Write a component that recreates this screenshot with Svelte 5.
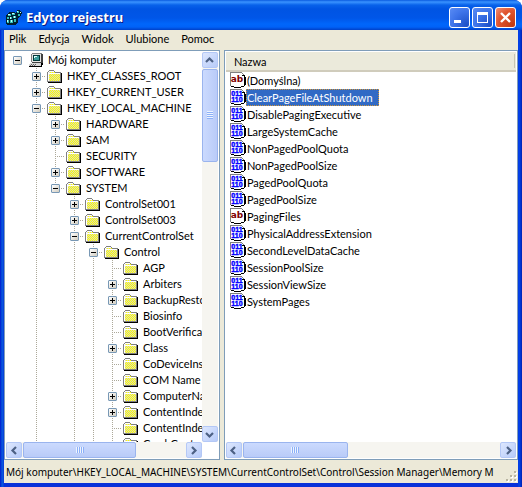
<script>
  const menu = ["Plik", "Edycja", "Widok", "Ulubione", "Pomoc"];

  const nodes = [
    { name: "Mój komputer", depth: 0, state: "open", icon: "computer" },
    { name: "HKEY_CLASSES_ROOT", depth: 1, state: "closed" },
    { name: "HKEY_CURRENT_USER", depth: 1, state: "closed" },
    { name: "HKEY_LOCAL_MACHINE", depth: 1, state: "open" },
    { name: "HARDWARE", depth: 2, state: "closed", lines: [1] },
    { name: "SAM", depth: 2, state: "closed", lines: [1] },
    { name: "SECURITY", depth: 2, state: "leaf", lines: [1] },
    { name: "SOFTWARE", depth: 2, state: "closed", lines: [1] },
    { name: "SYSTEM", depth: 2, state: "open", lines: [1], last: true },
    { name: "ControlSet001", depth: 3, state: "closed", lines: [1] },
    { name: "ControlSet003", depth: 3, state: "closed", lines: [1] },
    { name: "CurrentControlSet", depth: 3, state: "open", lines: [1] },
    { name: "Control", depth: 4, state: "open", lines: [1, 3] },
    { name: "AGP", depth: 5, state: "leaf", lines: [1, 3, 4] },
    { name: "Arbiters", depth: 5, state: "closed", lines: [1, 3, 4] },
    { name: "BackupRestore", depth: 5, state: "closed", lines: [1, 3, 4] },
    { name: "Biosinfo", depth: 5, state: "leaf", lines: [1, 3, 4] },
    { name: "BootVerification", depth: 5, state: "leaf", lines: [1, 3, 4] },
    { name: "Class", depth: 5, state: "closed", lines: [1, 3, 4] },
    { name: "CoDeviceInstallers", depth: 5, state: "leaf", lines: [1, 3, 4] },
    { name: "COM Name Arbiter", depth: 5, state: "leaf", lines: [1, 3, 4] },
    { name: "ComputerName", depth: 5, state: "closed", lines: [1, 3, 4] },
    { name: "ContentIndex", depth: 5, state: "closed", lines: [1, 3, 4] },
    { name: "ContentIndexCommon", depth: 5, state: "leaf", lines: [1, 3, 4] },
    { name: "CrashControl", depth: 5, state: "leaf", lines: [1, 3, 4] },
  ];

  const values = [
    { name: "(Domyślna)", type: "string" },
    { name: "ClearPageFileAtShutdown", type: "dword" },
    { name: "DisablePagingExecutive", type: "dword" },
    { name: "LargeSystemCache", type: "dword" },
    { name: "NonPagedPoolQuota", type: "dword" },
    { name: "NonPagedPoolSize", type: "dword" },
    { name: "PagedPoolQuota", type: "dword" },
    { name: "PagedPoolSize", type: "dword" },
    { name: "PagingFiles", type: "string" },
    { name: "PhysicalAddressExtension", type: "dword" },
    { name: "SecondLevelDataCache", type: "dword" },
    { name: "SessionPoolSize", type: "dword" },
    { name: "SessionViewSize", type: "dword" },
    { name: "SystemPages", type: "dword" },
  ];

  const path =
    "Mój komputer\\HKEY_LOCAL_MACHINE\\SYSTEM\\CurrentControlSet\\Control\\Session Manager\\Memory M";

  let selected = $state("ClearPageFileAtShutdown");
</script>

{#snippet arrow(label, d)}
  <button class="scroll-btn" aria-label={label}>
    <svg width="9" height="9" viewBox="0 0 9 9"><path {d} /></svg>
  </button>
{/snippet}

<svg class="defs" width="0" height="0" aria-hidden="true">
  <defs>
    <pattern id="dither" width="2" height="2" patternUnits="userSpaceOnUse">
      <path fill="#d8d8c0" d="M0 0h2v2H0z" />
      <path fill="#ffff00" d="M0 0h1v1H0zM1 1h1v1H1z" />
    </pattern>
    <symbol id="folder" viewBox="0 0 16 16">
      <path fill="#808080" d="M3 2h5v1H3zM2 3h1v1H2zM8 3h1v1H8zM9 4h6v1H9zM1 4h1v9H1z" />
      <path fill="#fff" d="M3 3h5v1H3zM2 4h1v9H2zM3 5h11v1H3z" />
      <path fill="url(#dither)" d="M3 4h6v1H3zM3 6h11v7H3z" />
      <path fill="#808080" d="M14 5h1v8h-1zM1 13h14v1H1z" />
      <path fill="#000" d="M15 5h1v10H2v-1h13z" />
    </symbol>
    <symbol id="computer" viewBox="0 0 16 16">
      <path fill="#808080" d="M5 1h10v1H5zM4 2h1v8H4z" />
      <path fill="#e4e4e4" d="M5 2h9v8H5z" />
      <path fill="#404040" d="M14 2h2v9h-2zM5 10h10v1H5z" />
      <path fill="#003838" d="M6 3h7v6H6z" />
      <path fill="#3c9c9c" d="M7 4h5v4H7z" />
      <path fill="#e0ffff" d="M7 4h3v1H7zM7 5h1v1H7z" />
      <path fill="#d8d8d8" d="M3 11h11v1H3zM2 12h12v1H2zM2 13h12v1H2z" />
      <path fill="#606060" d="M4 12h1v1H4zM6 12h1v1H6zM8 12h1v1H8zM3 13h1v1H3zM5 13h1v1H5zM7 13h1v1H7z" />
      <path fill="#000" d="M14 11h2v2h-1v2H2v-1h12z" />
    </symbol>
    <symbol id="page" viewBox="0 0 16 16">
      <path fill="#fff" d="M1 1h11l2 3v10h-3v1H5v-1H1z" />
      <path fill="#808080" d="M0 0h12v1H1v13H0zM12 1h1v1h-1zM13 2h1v1h-1z" />
      <path fill="#000" d="M12 3h3v1h-3zM14 4h1v10h-1zM15 5h1v8h-1zM1 14h3v1H1zM4 15h7v1H4zM11 14h3v1h-3z" />
    </symbol>
  </defs>
</svg>

<div class="window">
  <header class="title-bar">
    <svg class="app-icon" width="16" height="16" viewBox="0 0 16 16" aria-hidden="true">
      <path fill="#002030" d="M1 5l3-2h5l1 2 1-4h3l2 3-2 4-2 1v5l-3 2H1l-1-2V6z" />
      <path fill="#30c0b8" d="M2 5h3v2H2zM6 4h3v2H6zM1 8h2v2H1zM4 8h2v2H4zM7 7h3v2H7zM1 11h2v3H1zM4 11h3v3H4zM8 10h2v3H8zM11 2h2v2h-2zM12 5h2v2h-2z" />
      <path fill="#c8ffff" d="M2 5h2v1H2zM6 4h2v1H6zM4 8h1v2H4zM8 7h1v2H8zM1 11h1v2H1zM5 11h1v2H5zM11 2h1v1h-1zM14 3h1v1h-1z" />
    </svg>
    <h1>Edytor rejestru</h1>
    <div class="controls">
      <button class="control" aria-label="Minimalizuj">
        <svg width="21" height="21" viewBox="0 0 21 21"><path d="M5 13h7v3H5z" /></svg>
      </button>
      <button class="control" aria-label="Maksymalizuj">
        <svg width="21" height="21" viewBox="0 0 21 21">
          <path fill-rule="evenodd" d="M5 5h11v11H5zM6 8v7h9V8z" />
        </svg>
      </button>
      <button class="control close" aria-label="Zamknij">
        <svg width="21" height="21" viewBox="0 0 21 21">
          <path class="cross" d="M6 6l9 9M15 6l-9 9" />
        </svg>
      </button>
    </div>
  </header>

  <nav class="menu-bar">
    {#each menu as item}
      <button>{item}</button>
    {/each}
  </nav>

  <main class="panes">
    <section class="pane tree-pane">
      <div class="tree-body">
        <ul class="tree">
          {#each nodes as node}
            <li>
              {#each Array(node.depth) as _, level}
                <span class="guide" class:line={node.lines?.includes(level)}></span>
              {/each}
              <span class="guide branch" class:line={node.depth > 0} class:last={node.last}>
                {#if node.state !== "leaf"}
                  <button
                    class="expander"
                    class:closed={node.state === "closed"}
                    aria-label={node.state === "open" ? "Zwiń" : "Rozwiń"}
                  ></button>
                {/if}
              </span>
              <svg class="icon" width="16" height="16" aria-hidden="true">
                <use href={node.icon ? "#computer" : "#folder"} />
              </svg>
              <span class="label">{node.name}</span>
            </li>
          {/each}
        </ul>
        <div class="scrollbar vertical">
          {@render arrow("W górę", "M1 6l3.5-3.5L8 6")}
          <div class="track"><div class="thumb"><i></i></div></div>
          {@render arrow("W dół", "M1 3l3.5 3.5L8 3")}
        </div>
      </div>
      <div class="scrollbar horizontal">
        {@render arrow("W lewo", "M6 1L2.5 4.5 6 8")}
        <div class="track"><div class="thumb"><i></i></div></div>
        {@render arrow("W prawo", "M3 1l3.5 3.5L3 8")}
      </div>
    </section>

    <section class="pane list-pane">
      <div class="column-head"><span>Nazwa</span></div>
      <ul class="values">
        {#each values as value}
          <li>
            <svg class="icon" width="16" height="16" viewBox="0 0 16 16" aria-hidden="true">
              <use href="#page" />
              {#if value.type === "string"}
                <text class="ab" x="7" y="10">ab</text>
              {:else}
                <text class="bits" x="7" y="7">011</text>
                <text class="bits" x="7" y="13">110</text>
              {/if}
            </svg>
            <button
              class="value"
              class:selected={selected === value.name}
              onclick={() => (selected = value.name)}>{value.name}</button
            >
          </li>
        {/each}
      </ul>
      <div class="scrollbar horizontal wide">
        {@render arrow("W lewo", "M6 1L2.5 4.5 6 8")}
        <div class="track"><div class="thumb"><i></i></div></div>
        {@render arrow("W prawo", "M3 1l3.5 3.5L3 8")}
      </div>
    </section>
  </main>

  <footer class="status-bar">
    <span class="path">{path}</span>
    <svg width="12" height="12" viewBox="0 0 12 12" aria-hidden="true">
      <path fill="#fff" d="M9 1h2v2H9zM5 5h2v2H5zM9 5h2v2H9zM1 9h2v2H1zM5 9h2v2H5zM9 9h2v2H9z" />
      <path fill="#b8b4a0" d="M8 0h2v2H8zM4 4h2v2H4zM8 4h2v2H8zM0 8h2v2H0zM4 8h2v2H4zM8 8h2v2H8z" />
    </svg>
  </footer>
</div>

<style>
  :global(body) {
    margin: 0;
    background: #fff;
  }

  .defs {
    display: block;
  }

  .window {
    display: flex;
    flex-direction: column;
    height: 100vh;
    box-sizing: border-box;
    overflow: hidden;
    padding: 0 4px 4px;
    border-radius: 8px 8px 0 0;
    background: linear-gradient(to right, #0019cf, #0855dd 2px, #0855dd 3px, #0831d9 4px, #0831d9 calc(100% - 4px), #0048f1 calc(100% - 3px), #0020b0);
    font-family: Tahoma, Lato, sans-serif;
    font-size: 11px;
    color: #000;
  }

  button {
    margin: 0;
    padding: 0;
    border: 0;
    background: none;
    font: inherit;
    color: inherit;
  }

  ul {
    margin: 0;
    padding: 0;
    list-style: none;
  }

  /* Title bar */
  .title-bar {
    display: flex;
    align-items: center;
    flex: none;
    height: 30px;
    box-sizing: border-box;
    margin: 0 -4px;
    padding: 4px 6px 0;
    background: linear-gradient(#0a5be0, #3a93ff 2px, #0862ea 5px, #0054e3 9px, #0056e8 18px, #0066fb 24px, #0062f8 27px, #0040c8);
  }

  .app-icon {
    flex: none;
    shape-rendering: crispEdges;
  }

  h1 {
    flex: 1;
    margin: 0 0 0 4px;
    font-family: "Trebuchet MS", "Noto Sans", sans-serif;
    font-size: 13px;
    font-weight: 700;
    line-height: 20px;
    color: #fff;
    text-shadow: 1px 1px #0a1883;
  }

  .controls {
    display: flex;
    gap: 2px;
  }

  .control {
    width: 21px;
    height: 21px;
    box-sizing: border-box;
    overflow: hidden;
    border: 1px solid #fff;
    border-radius: 3px;
    background: radial-gradient(circle at 90% 90%, #1c50c8, #3f75ea 60%, #5a8cf4);
  }

  .control svg {
    display: block;
    margin: -1px;
    fill: #fff;
  }

  .close {
    background: radial-gradient(circle at 90% 90%, #c23a10, #e0552f 60%, #f09078);
  }

  .cross {
    fill: none;
    stroke: #fff;
    stroke-width: 2.4;
  }

  /* Menu */
  .menu-bar {
    display: flex;
    gap: 12px;
    flex: none;
    height: 20px;
    box-sizing: border-box;
    padding: 0 0 4px 5px;
    background: #ece9d8;
  }

  /* Panes */
  .panes {
    display: flex;
    gap: 4px;
    flex: 1;
    min-height: 0;
    background: #ece9d8;
  }

  .pane {
    display: flex;
    flex-direction: column;
    min-width: 0;
    box-sizing: border-box;
    padding: 1px;
    border: 1px solid #7f9db9;
    background: #fff;
  }

  .tree-pane {
    flex: 0 0 42%;
  }

  .list-pane {
    flex: 1;
  }

  .tree-body {
    display: flex;
    flex: 1;
    min-height: 0;
  }

  .tree {
    flex: 1;
    min-width: 0;
    overflow: hidden;
    padding-left: 2px;
  }

  .tree li {
    display: flex;
    height: 16px;
    line-height: 16px;
    white-space: nowrap;
  }

  .guide {
    flex: none;
    display: flex;
    align-items: center;
    justify-content: center;
    width: 19px;
    height: 16px;
  }

  .line {
    background: repeating-linear-gradient(#aca899 0 1px, transparent 1px 2px) 9px 0 / 1px 100% no-repeat;
  }

  .branch.line {
    background:
      repeating-linear-gradient(#aca899 0 1px, transparent 1px 2px) 9px 0 / 1px 100% no-repeat,
      repeating-linear-gradient(to right, #aca899 0 1px, transparent 1px 2px) 9px 8px / 10px 1px no-repeat;
  }

  .branch.last {
    background-size: 1px 50%, 10px 1px;
  }

  .expander {
    width: 9px;
    height: 9px;
    box-sizing: border-box;
    border: 1px solid #7898b5;
    border-radius: 1px;
    background:
      linear-gradient(#000, #000) center / 5px 1px no-repeat,
      linear-gradient(135deg, #fff, #d2cdc0);
  }

  .expander.closed {
    background:
      linear-gradient(#000, #000) center / 5px 1px no-repeat,
      linear-gradient(#000, #000) center / 1px 5px no-repeat,
      linear-gradient(135deg, #fff, #d2cdc0);
  }

  .icon {
    flex: none;
    display: block;
    shape-rendering: crispEdges;
  }

  .label {
    margin-left: 5px;
  }

  /* Value list */
  .column-head {
    display: flex;
    flex: none;
    height: 20px;
    box-sizing: border-box;
    padding: 2px 1px 2px 8px;
    border-bottom: 2px solid #d0ccbc;
    background: #ebeadb;
    line-height: 16px;
  }

  .column-head span {
    flex: 1;
    border-right: 1px solid #c7c5b2;
  }

  .values {
    flex: 1;
    min-height: 0;
    overflow: hidden;
    padding-left: 4px;
  }

  .values li {
    display: flex;
    height: 17px;
    line-height: 17px;
  }

  .value {
    padding: 0 6px 0 1px;
    line-height: 17px;
    white-space: nowrap;
  }

  .value.selected {
    background: #316ac5;
    outline: 1px dotted #ce953a;
    outline-offset: -1px;
    color: #fff;
  }

  .ab {
    font: 700 9px "DejaVu Sans", sans-serif;
    fill: #800000;
    text-anchor: middle;
  }

  .bits {
    font: 700 7px "Liberation Sans", sans-serif;
    fill: #0000ff;
    stroke: #0000ff;
    stroke-width: 0.4;
    text-anchor: middle;
  }

  /* Scroll bars */
  .scrollbar {
    display: flex;
    flex: none;
    gap: 1px;
    background: #f6f5f0;
  }

  .vertical {
    flex-direction: column;
    width: 16px;
  }

  .horizontal {
    height: 16px;
    margin-right: 16px;
  }

  .wide {
    margin-right: 0;
  }

  .scroll-btn {
    display: grid;
    place-items: center;
    flex: none;
    width: 16px;
    height: 16px;
    box-sizing: border-box;
    border: 1px solid #b4c8f6;
    border-radius: 2px;
    background: linear-gradient(135deg, #dde7fe, #b7cbf9);
  }

  .scroll-btn path {
    fill: none;
    stroke: #4d6185;
    stroke-width: 2.2;
  }

  .track {
    flex: 1;
    display: flex;
  }

  .vertical .track {
    flex-direction: column;
  }

  .thumb {
    display: grid;
    place-items: center;
    flex: 0 0 70%;
    box-sizing: border-box;
    border: 1px solid #9ab4ee;
    border-radius: 2px;
    background: linear-gradient(#cbdafe, #b9cbf8);
  }

  .vertical .thumb {
    flex-basis: 26%;
    background: linear-gradient(to right, #cbdafe, #b9cbf8);
  }

  .wide .thumb {
    flex-basis: 41%;
  }

  .thumb i {
    width: 8px;
    height: 6px;
    background: repeating-linear-gradient(to right, #eef4fe 0 1px, #8cb0f8 1px 2px);
  }

  .vertical .thumb i {
    width: 6px;
    height: 8px;
    background: repeating-linear-gradient(#eef4fe 0 1px, #8cb0f8 1px 2px);
  }

  /* Status bar */
  .status-bar {
    display: flex;
    align-items: flex-end;
    justify-content: space-between;
    flex: none;
    height: 23px;
    background: #ece9d8;
  }

  .path {
    flex: 1;
    overflow: hidden;
    padding-left: 2px;
    font-family: Tahoma, "Noto Sans", sans-serif;
    font-size: 10px;
    line-height: 22px;
    white-space: nowrap;
  }

  .status-bar svg {
    flex: none;
  }
</style>
